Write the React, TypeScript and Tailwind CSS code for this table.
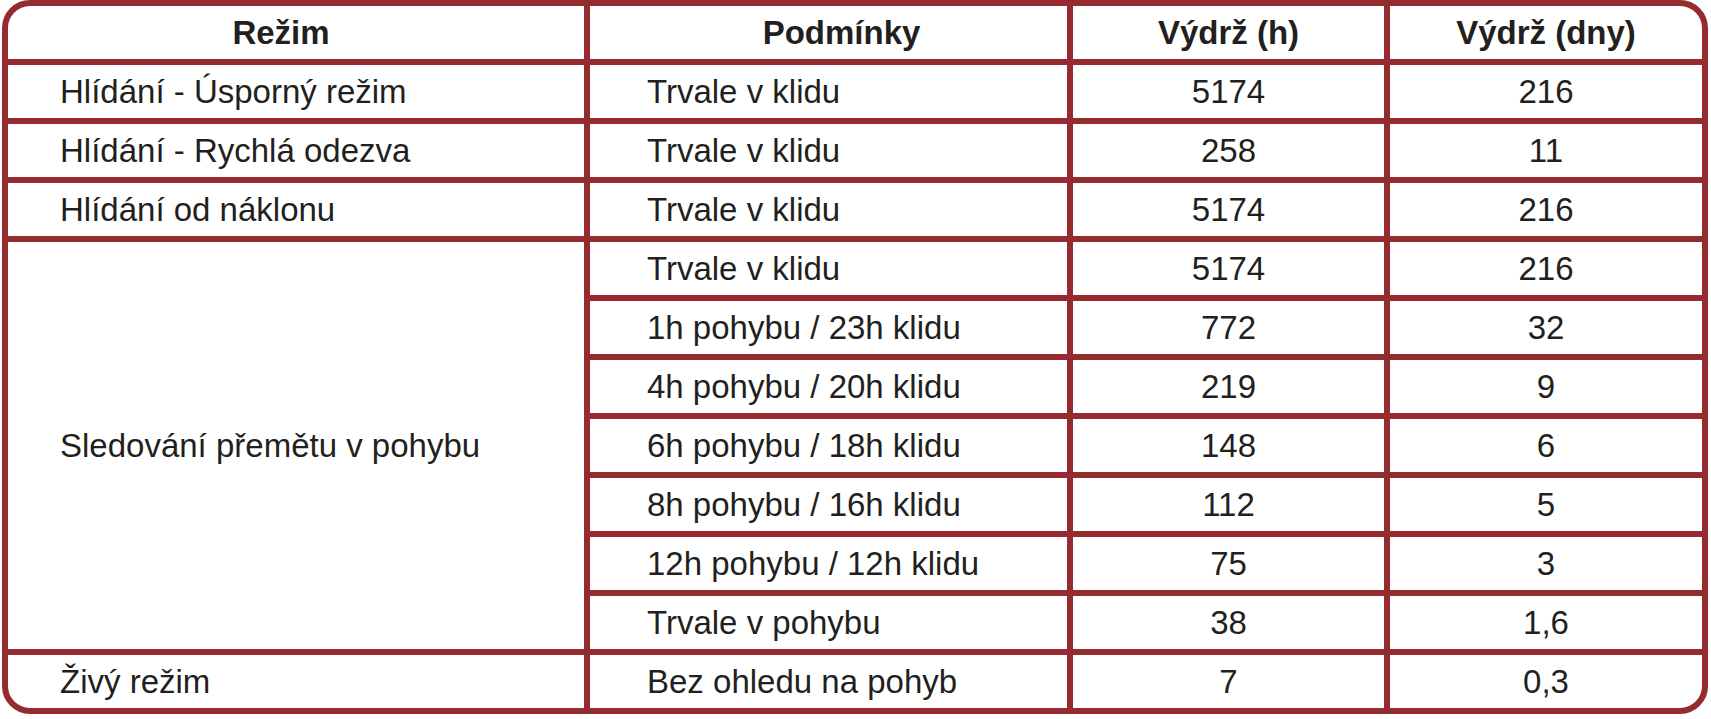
import React from "react";

const ROWS: { cond: string; h: string; d: string }[] = [
  { cond: "Trvale v klidu", h: "5174", d: "216" },
  { cond: "1h pohybu / 23h klidu", h: "772", d: "32" },
  { cond: "4h pohybu / 20h klidu", h: "219", d: "9" },
  { cond: "6h pohybu / 18h klidu", h: "148", d: "6" },
  { cond: "8h pohybu / 16h klidu", h: "112", d: "5" },
  { cond: "12h pohybu / 12h klidu", h: "75", d: "3" },
  { cond: "Trvale v pohybu", h: "38", d: "1,6" },
];

const SIMPLE = [
  { mode: "Hlídání - Úsporný režim", cond: "Trvale v klidu", h: "5174", d: "216" },
  { mode: "Hlídání - Rychlá odezva", cond: "Trvale v klidu", h: "258", d: "11" },
  { mode: "Hlídání od náklonu", cond: "Trvale v klidu", h: "5174", d: "216" },
];

const cell = "bg-white flex items-center h-[53px]";
const left1 = `${cell} pl-[52px]`;
const left2 = `${cell} pl-[57px]`;
const mid = `${cell} justify-center`;

export default function App() {
  return (
    <div className="w-[1711px] h-[719px] bg-white font-['Liberation_Sans',Arial,sans-serif] text-[33px] leading-none text-[#231f20]">
      <div className="ml-[2px] w-[1706px] rounded-[28px] border-[6px] border-[#952b2f] bg-[#952b2f] overflow-hidden">
        <div className="grid grid-cols-[576px_477px_311px_312px] gap-[6px]">
          {/* header */}
          <div className={`${mid} font-bold pr-[30px]`}>Režim</div>
          <div className={`${mid} font-bold pl-[26px]`}>Podmínky</div>
          <div className={`${mid} font-bold`}>Výdrž (h)</div>
          <div className={`${mid} font-bold`}>Výdrž (dny)</div>

          {SIMPLE.map((r) => (
            <React.Fragment key={r.mode}>
              <div className={left1}>{r.mode}</div>
              <div className={left2}>{r.cond}</div>
              <div className={mid}>{r.h}</div>
              <div className={mid}>{r.d}</div>
            </React.Fragment>
          ))}

          <div className="bg-white row-span-7 flex items-center pl-[52px]">
            Sledování přemětu v pohybu
          </div>
          {ROWS.map((r) => (
            <React.Fragment key={r.cond}>
              <div className={left2}>{r.cond}</div>
              <div className={mid}>{r.h}</div>
              <div className={mid}>{r.d}</div>
            </React.Fragment>
          ))}

          <div className={left1}>Živý režim</div>
          <div className={left2}>Bez ohledu na pohyb</div>
          <div className={mid}>7</div>
          <div className={mid}>0,3</div>
        </div>
      </div>
    </div>
  );
}
